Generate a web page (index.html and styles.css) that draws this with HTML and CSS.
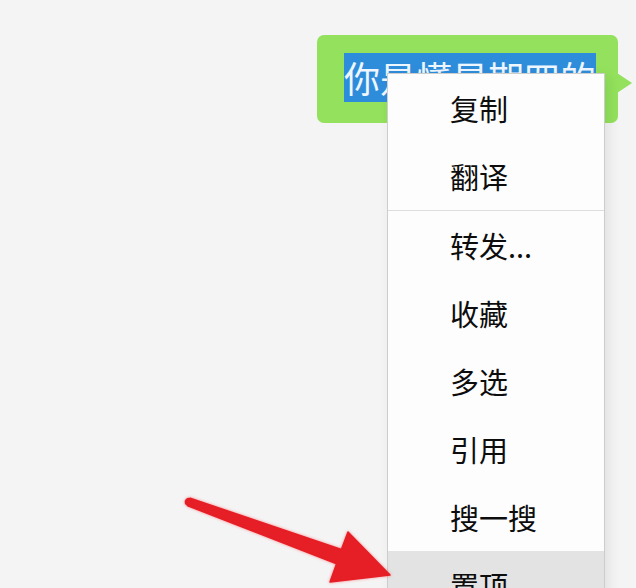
FILE: index.html
```html
<!DOCTYPE html>
<html lang="zh-CN">
<head>
<meta charset="utf-8">
<title>聊天菜单</title>
<link rel="stylesheet" href="styles.css">
</head>
<body>
<div class="chat">
  <div class="row">
    <div class="bubble"><span class="sel">你是懂星期四的</span></div>
  </div>
</div>
<ul class="menu">
  <li class="item">复制</li>
  <li class="item">翻译</li>
  <li class="sep"></li>
  <li class="item">转发...</li>
  <li class="item">收藏</li>
  <li class="item">多选</li>
  <li class="item">引用</li>
  <li class="item">搜一搜</li>
  <li class="item hover">置顶</li>
</ul>
<svg class="arrow" width="636" height="588" viewBox="0 0 636 588" xmlns="http://www.w3.org/2000/svg">
  <g fill="#e61e26" stroke="#e61e26" stroke-width="1.5" stroke-linejoin="round">
    <polygon points="190.2,498.2 341.4,549.5 348,532 390,575 330,582 336.6,563.7 187.8,505.8"/>
    <circle cx="189" cy="502" r="3.6"/>
  </g>
</svg>
</body>
</html>
```
FILE: styles.css
```css
html, body {
  margin: 0;
  padding: 0;
  width: 636px;
  height: 588px;
  overflow: hidden;
}
body {
  background: #f4f4f5;
  font-family: "Noto Sans CJK SC", "Microsoft YaHei", sans-serif;
  position: relative;
}
.chat {
  display: flex;
  flex-direction: column;
  padding: 35px 18px 0 0;
}
.row {
  display: flex;
  justify-content: flex-end;
}
.bubble {
  position: relative;
  background: #93e15c;
  border-radius: 7px;
  padding: 18px 22px 21px 27px;
  font-size: 36px;
  line-height: 49px;
  color: #eef7ff;
}
.bubble::after {
  content: "";
  position: absolute;
  right: -14px;
  top: 38px;
  border-left: 15px solid #93e15c;
  border-top: 10px solid transparent;
  border-bottom: 10px solid transparent;
}
.sel {
  display: inline-block;
  background: #2e8ddb;
}
.menu {
  position: absolute;
  left: 387px;
  top: 73px;
  width: 218px;
  box-sizing: border-box;
  margin: 0;
  padding: 0;
  list-style: none;
  background: #fdfdfd;
  border: 1px solid #cdcdcd;
  box-shadow: 4px 3px 12px rgba(0, 0, 0, 0.08);
}
.item {
  height: 68px;
  line-height: 68px;
  padding-left: 62px;
  font-size: 29px;
  font-weight: 400;
  color: #0d0d0d;
}
.sep {
  height: 1px;
  background: #dedede;
}
.hover {
  background: #e3e3e3;
}
.arrow {
  position: absolute;
  left: 0;
  top: 0;
  filter: drop-shadow(0 0 1.5px rgba(255, 70, 70, 0.6));
}
```
